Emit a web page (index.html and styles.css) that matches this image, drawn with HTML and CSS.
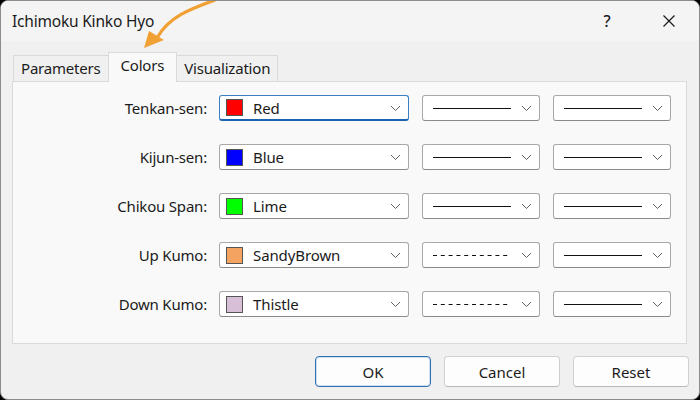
FILE: index.html
```html
<!DOCTYPE html>
<html>
<head>
<meta charset="utf-8">
<link rel="stylesheet" href="styles.css">
</head>
<body>
<div class="window">
  <div class="titlebar">
    <span class="title">Ichimoku Kinko Hyo</span>
    <div class="tb-btns">
      <span class="help">?</span>
      <span class="close"><svg width="14" height="14" viewBox="0 0 14 14"><path d="M1.5 1.5 L12.5 12.5 M12.5 1.5 L1.5 12.5" stroke="#1a1a1a" stroke-width="1.2" fill="none"/></svg></span>
    </div>
  </div>
  <div class="tabs">
    <div class="tab">Parameters</div>
    <div class="tab active">Colors</div>
    <div class="tab">Visualization</div>
  </div>
  <div class="panel">
    <div class="grid">
      <label class="lbl">Tenkan-sen:</label>
      <div class="combo color focus"><span class="sw" style="background:#ff0000"></span><span class="ctext">Red</span><svg class="chev" width="11" height="7" viewBox="0 0 11 7"><path d="M1 1 L5.5 5.5 L10 1" stroke="#606060" stroke-width="1" fill="none"/></svg></div>
      <div class="combo line"><svg class="ln" width="78" height="3"><line x1="0" y1="1.5" x2="78" y2="1.5" stroke="#111" stroke-width="1.2"/></svg><svg class="chev" width="11" height="7" viewBox="0 0 11 7"><path d="M1 1 L5.5 5.5 L10 1" stroke="#606060" stroke-width="1" fill="none"/></svg></div>
      <div class="combo line"><svg class="ln" width="78" height="3"><line x1="0" y1="1.5" x2="78" y2="1.5" stroke="#111" stroke-width="1.2"/></svg><svg class="chev" width="11" height="7" viewBox="0 0 11 7"><path d="M1 1 L5.5 5.5 L10 1" stroke="#606060" stroke-width="1" fill="none"/></svg></div>

      <label class="lbl">Kijun-sen:</label>
      <div class="combo color"><span class="sw" style="background:#0000ff"></span><span class="ctext">Blue</span><svg class="chev" width="11" height="7" viewBox="0 0 11 7"><path d="M1 1 L5.5 5.5 L10 1" stroke="#606060" stroke-width="1" fill="none"/></svg></div>
      <div class="combo line"><svg class="ln" width="78" height="3"><line x1="0" y1="1.5" x2="78" y2="1.5" stroke="#111" stroke-width="1.2"/></svg><svg class="chev" width="11" height="7" viewBox="0 0 11 7"><path d="M1 1 L5.5 5.5 L10 1" stroke="#606060" stroke-width="1" fill="none"/></svg></div>
      <div class="combo line"><svg class="ln" width="78" height="3"><line x1="0" y1="1.5" x2="78" y2="1.5" stroke="#111" stroke-width="1.2"/></svg><svg class="chev" width="11" height="7" viewBox="0 0 11 7"><path d="M1 1 L5.5 5.5 L10 1" stroke="#606060" stroke-width="1" fill="none"/></svg></div>

      <label class="lbl">Chikou Span:</label>
      <div class="combo color"><span class="sw" style="background:#00ff00"></span><span class="ctext">Lime</span><svg class="chev" width="11" height="7" viewBox="0 0 11 7"><path d="M1 1 L5.5 5.5 L10 1" stroke="#606060" stroke-width="1" fill="none"/></svg></div>
      <div class="combo line"><svg class="ln" width="78" height="3"><line x1="0" y1="1.5" x2="78" y2="1.5" stroke="#111" stroke-width="1.2"/></svg><svg class="chev" width="11" height="7" viewBox="0 0 11 7"><path d="M1 1 L5.5 5.5 L10 1" stroke="#606060" stroke-width="1" fill="none"/></svg></div>
      <div class="combo line"><svg class="ln" width="78" height="3"><line x1="0" y1="1.5" x2="78" y2="1.5" stroke="#111" stroke-width="1.2"/></svg><svg class="chev" width="11" height="7" viewBox="0 0 11 7"><path d="M1 1 L5.5 5.5 L10 1" stroke="#606060" stroke-width="1" fill="none"/></svg></div>

      <label class="lbl">Up Kumo:</label>
      <div class="combo color"><span class="sw" style="background:#f4a460"></span><span class="ctext">SandyBrown</span><svg class="chev" width="11" height="7" viewBox="0 0 11 7"><path d="M1 1 L5.5 5.5 L10 1" stroke="#606060" stroke-width="1" fill="none"/></svg></div>
      <div class="combo line"><svg class="ln" width="78" height="3"><line x1="0" y1="1.5" x2="78" y2="1.5" stroke="#111" stroke-width="1.2" stroke-dasharray="4 3.8"/></svg><svg class="chev" width="11" height="7" viewBox="0 0 11 7"><path d="M1 1 L5.5 5.5 L10 1" stroke="#606060" stroke-width="1" fill="none"/></svg></div>
      <div class="combo line"><svg class="ln" width="78" height="3"><line x1="0" y1="1.5" x2="78" y2="1.5" stroke="#111" stroke-width="1.2"/></svg><svg class="chev" width="11" height="7" viewBox="0 0 11 7"><path d="M1 1 L5.5 5.5 L10 1" stroke="#606060" stroke-width="1" fill="none"/></svg></div>

      <label class="lbl">Down Kumo:</label>
      <div class="combo color"><span class="sw" style="background:#d8bfd8"></span><span class="ctext">Thistle</span><svg class="chev" width="11" height="7" viewBox="0 0 11 7"><path d="M1 1 L5.5 5.5 L10 1" stroke="#606060" stroke-width="1" fill="none"/></svg></div>
      <div class="combo line"><svg class="ln" width="78" height="3"><line x1="0" y1="1.5" x2="78" y2="1.5" stroke="#111" stroke-width="1.2" stroke-dasharray="4 3.8"/></svg><svg class="chev" width="11" height="7" viewBox="0 0 11 7"><path d="M1 1 L5.5 5.5 L10 1" stroke="#606060" stroke-width="1" fill="none"/></svg></div>
      <div class="combo line"><svg class="ln" width="78" height="3"><line x1="0" y1="1.5" x2="78" y2="1.5" stroke="#111" stroke-width="1.2"/></svg><svg class="chev" width="11" height="7" viewBox="0 0 11 7"><path d="M1 1 L5.5 5.5 L10 1" stroke="#606060" stroke-width="1" fill="none"/></svg></div>
    </div>
  </div>
  <div class="buttons">
    <button class="btn primary">OK</button>
    <button class="btn">Cancel</button>
    <button class="btn">Reset</button>
  </div>
  <svg class="arrow" width="90" height="56" viewBox="0 0 90 56">
    <path d="M82 0 C 60 8, 36 16, 24 38" stroke="#f1a134" stroke-width="3.2" fill="none" stroke-linecap="round"/>
    <path d="M11 48 L16 31 L31 40 Z" fill="#f1a134"/>
  </svg>
</div>
</body>
</html>
```

FILE: styles.css
```css
* { box-sizing: border-box; }
html, body { margin: 0; padding: 0; background: #000; }
body { width: 700px; height: 400px; overflow: hidden; font-family: "Noto Sans", "Open Sans", sans-serif; color: #1b1b1b; }
.window {
  position: relative;
  width: 700px; height: 400px;
  background: #f0f0f0;
  border: 1px solid #8c8c8c;
  border-radius: 8px;
  overflow: hidden;
  display: flex; flex-direction: column;
}
.titlebar {
  height: 40px;
  background: #f5f4f4;
  display: flex; align-items: center; justify-content: space-between;
  padding-left: 11px;
}
.title { font-size: 15.5px; letter-spacing: -0.2px; }
.tb-btns { display: flex; align-items: center; height: 100%; }
.help { width: 60px; text-align: center; font-size: 16px; font-weight: 500; margin-right: 0px; padding-right: 4px; }
.close { width: 60px; height: 40px; display: flex; align-items: center; justify-content: center; }
.tabs {
  display: flex; align-items: flex-end;
  height: 40px;
  padding-left: 12px;
  margin-top: 0;
}
.tab {
  height: 26px;
  padding: 0 7px;
  font-size: 15px;
  line-height: 25px;
  border: 1px solid #dadada;
  border-bottom: none;
  background: #f0f0f0;
  margin-bottom: 0;
  letter-spacing: -0.2px;
}
.tab + .tab { margin-left: -1px; }
.tab.active {
  line-height: 24px;
  background: #f9f9f9;
  position: relative; z-index: 1;
  margin-bottom: -1px;
  height: 30px;
  padding: 0 12px;
}
.panel {
  margin-left: 11px;
  width: 675px;
  height: 263px;
  background: #f9f9f9;
  border: 1px solid #dadada;
  padding-top: 13px;
}
.grid {
  display: grid;
  grid-template-columns: 193px 190px 118px 118px;
  column-gap: 13px;
  row-gap: 23px;
  grid-auto-rows: 26px;
}
.lbl { font-size: 15px; text-align: right; align-self: center; letter-spacing: -0.2px; margin-right: -1px; }
.combo {
  position: relative;
  background: #fff;
  border: 1px solid #a8a8a8;
  border-bottom-color: #8a8a8a;
  border-radius: 3px;
  display: flex; align-items: center;
}
.combo.focus { border-color: #3a7fc4; border-bottom: 2px solid #1a63b0; }
.sw { width: 17px; height: 17px; border: 1px solid #555; margin-left: 6px; flex: none; }
.ctext { font-size: 15px; margin-left: 10px; flex: 1; letter-spacing: -0.1px; }
.chev { position: absolute; right: 7px; top: 9px; }
.ln { margin-left: 10px; }
.buttons {
  display: flex; justify-content: flex-end; gap: 13px;
  padding-right: 10px;
  margin-top: 12px;
}
.btn {
  width: 116px; height: 31px;
  background: #fdfdfd;
  border: 1px solid #d0d0d0;
  border-bottom-color: #b8b8b8;
  border-radius: 4px;
  font-family: "Noto Sans", "Open Sans", sans-serif;
  font-size: 15px;
  color: #1b1b1b;
  padding: 0;
}
.btn.primary { border: 1px solid #2f6fb3; box-shadow: inset 0 0 0 1px #cfe0f3; }
.arrow { position: absolute; left: 132px; top: -1px; }
```
